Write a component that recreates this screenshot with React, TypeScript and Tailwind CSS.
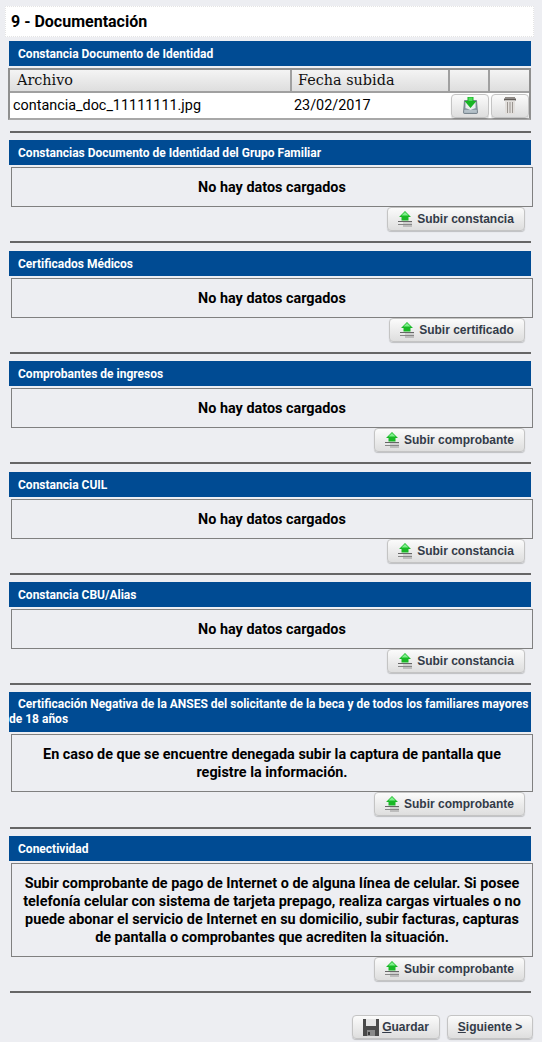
import React from "react";

function UploadIcon() {
  return (
    <svg width="14" height="16" viewBox="0 0 14 16" className="shrink-0">
      <path d="M7 0 L13 6 H10.5 V9.5 H3.5 V6 H1 Z" fill="#19b826" />
      <path d="M7 1 L10.5 4.5 H3.5 Z" fill="#7df08a" />
      <rect x="0" y="10" width="14" height="1" fill="#666" />
      <rect x="5" y="11" width="9" height="2" fill="#cfcfcf" />
      <rect x="0" y="13" width="14" height="1" fill="#888" />
      <rect x="5" y="14" width="9" height="2" fill="#bdbdbd" />
    </svg>
  );
}

function DownloadIcon() {
  return (
    <svg width="15" height="17" viewBox="0 0 15 17">
      <path d="M1.5 3.5 H13.5 L14.5 15.5 Q14.5 16.5 13.5 16.5 H1.5 Q0.5 16.5 0.5 15.5 Z" fill="#8d9ca7" stroke="#5d6b75" strokeWidth="0.7" />
      <path d="M2.5 4.5 H12.5 V11 L7.5 13 L2.5 11 Z" fill="#e9edef" />
      <rect x="1.2" y="13" width="12.6" height="2.8" fill="#b4c0c8" />
      <path d="M4.5 0 H10.5 V4 H13.5 L7.5 11 L1.5 4 H4.5 Z" fill="#17b524" />
      <path d="M5.5 0.5 H9.5 V4 H5.5 Z" fill="#4fdc5a" />
    </svg>
  );
}

function TrashIcon() {
  return (
    <svg width="12" height="17" viewBox="0 0 12 17">
      <rect x="1" y="0" width="10" height="1.5" fill="#8f8a85" />
      <rect x="0" y="1.5" width="12" height="2" fill="#5f5a56" />
      <rect x="1" y="3.5" width="10" height="13.5" fill="#e2dfdc" />
      <rect x="3" y="5" width="1" height="11" fill="#9a9590" />
      <rect x="5.5" y="5" width="1" height="11" fill="#9a9590" />
      <rect x="8" y="5" width="1" height="11" fill="#9a9590" />
    </svg>
  );
}

function SaveIcon() {
  return (
    <svg width="16" height="17" viewBox="0 0 16 17" className="shrink-0">
      <path d="M0 0 H3 V7 H13 V0 H16 V17 H0 Z" fill="#4a4a4a" />
      <rect x="3" y="0" width="10" height="7" fill="#e6e6e6" />
      <rect x="4" y="11" width="8" height="6" fill="#8a8a8a" />
      <rect x="5" y="13" width="2" height="3" fill="#3a3a3a" />
    </svg>
  );
}

function Btn({ children, className }: { children: React.ReactNode; className: string }) {
  return (
    <button
      className={
        "flex items-center justify-center rounded-[4px] border border-[#c4c4c4] bg-gradient-to-b from-[#fbfbfb] to-[#dedede] font-['Liberation_Sans',sans-serif] text-[12px] font-bold text-[#333b48] shadow-[0_1px_1px_rgba(0,0,0,0.2)] " +
        className
      }
    >
      {children}
    </button>
  );
}

function Upload({ label, width }: { label: string; width: string }) {
  return (
    <div className="flex h-[24px] justify-end pr-[17px]">
      <Btn className={"h-[24px] gap-[5px] " + width}>
        <UploadIcon />
        <span className="pb-[1px]">{label}</span>
      </Btn>
    </div>
  );
}

function Header({ children, className }: { children: React.ReactNode; className?: string }) {
  return (
    <div className={"ml-[9px] w-[522px] bg-[#004b93] text-[12px] font-bold text-white " + (className ?? "flex h-[25px] items-center pl-[9px]")}>
      {children}
    </div>
  );
}

function Box({ children, h }: { children: React.ReactNode; h: string }) {
  return (
    <div className={"mt-[2px] ml-[11px] flex w-[522px] items-center justify-center border border-[#808080] px-[8px] pt-[1px] text-center text-[14.4px] leading-[18px] font-bold text-black " + h}>
      <div>{children}</div>
    </div>
  );
}

function Rule({ className }: { className: string }) {
  return <div className={"ml-[10px] h-[2px] w-[521px] bg-[#666666] " + className} />;
}

function Th({ children, className }: { children?: React.ReactNode; className: string }) {
  return (
    <div className={"flex items-center border-r-2 border-[#a0a0a0] pl-[6px] last:border-r-0 " + className}>
      {children}
    </div>
  );
}

function EmptySection({ title, label, width }: { title: string; label: string; width: string }) {
  return (
    <>
      <Header>{title}</Header>
      <Box h="h-[40px]">No hay datos cargados</Box>
      <Upload label={label} width={width} />
    </>
  );
}

export default function App() {
  return (
    <div className="h-[1042px] w-[542px] overflow-hidden bg-[#edeef2] font-['Roboto',sans-serif]">
      <div className="h-[6px]" />
      <div className="ml-[5px] flex h-[31px] w-[529px] items-center border border-dotted border-[#e4e4e4] bg-white pl-[5px] text-[16px] font-bold text-black">
        9 - Documentación
      </div>
      <div className="h-[4px]" />
      <Header>Constancia Documento de Identidad</Header>
      <div className="mt-[2px] ml-[8px] h-[52px] w-[523px] border-2 border-[#8f8f8f] border-b-[#a8a8a8] bg-white">
        <div className="flex h-[23px] border-b-2 border-[#a0a0a0] bg-gradient-to-b from-[#f4f4f4] to-[#dedede] font-['DejaVu_Serif',serif] text-[14.4px] text-[#111]">
          <Th className="w-[282px] pl-[7px]">Archivo</Th>
          <Th className="w-[158px]">Fecha subida</Th>
          <Th className="w-[40px]" />
          <Th className="flex-1" />
        </div>
        <div className="flex h-[25px] items-center text-[14.4px] text-black">
          <div className="w-[282px] pl-[3px]">contancia_doc_11111111.jpg</div>
          <div className="w-[158px] pl-[2px]">23/02/2017</div>
          <div className="flex flex-1 gap-[2px] pl-[1px]">
            <Btn className="h-[24px] w-[38px]"><DownloadIcon /></Btn>
            <Btn className="h-[24px] w-[38px]"><TrashIcon /></Btn>
          </div>
        </div>
      </div>
      <Rule className="mt-[11px] mb-[7px]" />

      <EmptySection title="Constancias Documento de Identidad del Grupo Familiar" label="Subir constancia" width="w-[138px]" />
      <Rule className="mt-[10px] mb-[8px]" />

      <EmptySection title="Certificados Médicos" label="Subir certificado" width="w-[136px]" />
      <Rule className="mt-[10px] mb-[7px]" />

      <EmptySection title="Comprobantes de ingresos" label="Subir comprobante" width="w-[151px]" />
      <Rule className="mt-[10px] mb-[8px]" />

      <EmptySection title="Constancia CUIL" label="Subir constancia" width="w-[138px]" />
      <Rule className="mt-[10px] mb-[7px]" />

      <EmptySection title="Constancia CBU/Alias" label="Subir constancia" width="w-[138px]" />
      <Rule className="mt-[10px] mb-[7px]" />

      <Header className="h-[40px] pt-[5px] leading-[15px]">
        <div className="indent-[9px]">Certificación Negativa de la ANSES del solicitante de la beca y de todos los familiares mayores de 18 años</div>
      </Header>
      <Box h="h-[58px]">
        En caso de que se encuentre denegada subir la captura de pantalla que registre la información.
      </Box>
      <Upload label="Subir comprobante" width="w-[151px]" />
      <Rule className="mt-[11px] mb-[7px]" />

      <Header>Conectividad</Header>
      <Box h="h-[94px]">
        Subir comprobante de pago de Internet o de alguna línea de celular. Si posee telefonía celular con sistema de tarjeta prepago, realiza cargas virtuales o no puede abonar el servicio de Internet en su domicilio, subir facturas, capturas de pantalla o comprobantes que acrediten la situación.
      </Box>
      <Upload label="Subir comprobante" width="w-[151px]" />
      <Rule className="mt-[10px]" />

      <div className="mt-[22px] flex justify-end gap-[7px] pr-[9px]">
        <Btn className="h-[24px] w-[88px] gap-[3px]">
          <SaveIcon />
          <span className="pb-[1px]"><span className="underline">G</span>uardar</span>
        </Btn>
        <Btn className="h-[24px] w-[86px]">
          <span className="pb-[1px]"><span className="underline">S</span>iguiente &gt;</span>
        </Btn>
      </div>
    </div>
  );
}
